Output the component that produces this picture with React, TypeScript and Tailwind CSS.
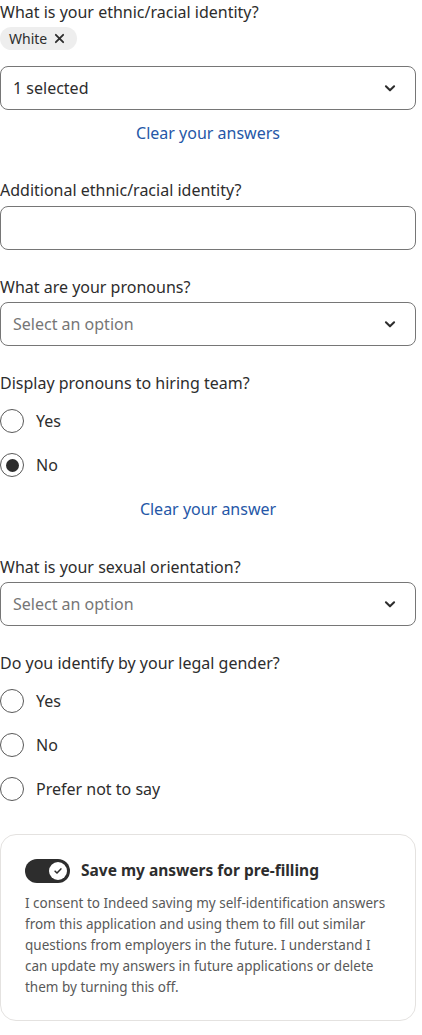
import React from "react";

const font = { fontFamily: '"Noto Sans", "Open Sans", sans-serif' };

function Chevron() {
  return (
    <svg width="14" height="14" viewBox="0 0 24 24" fill="none" stroke="#2d2d2d" strokeWidth="3.5" strokeLinecap="round" strokeLinejoin="round">
      <path d="M5 9l7 7 7-7" />
    </svg>
  );
}

function Select({ value, placeholder }: { value?: string; placeholder?: string }) {
  return (
    <div className="flex h-[44px] w-full items-center justify-between rounded-[8px] border border-[#767676] pl-[12px] pr-[18px]">
      <span className={value ? "text-[16px] text-[#2d2d2d]" : "text-[16px] text-[#767676]"}>{value ?? placeholder}</span>
      <Chevron />
    </div>
  );
}

function Label({ children, className = "" }: { children: React.ReactNode; className?: string }) {
  return <div className={"text-[16px] leading-[24px] text-[#2d2d2d] " + className}>{children}</div>;
}

function Radio({ label, checked = false }: { label: string; checked?: boolean }) {
  return (
    <div className="flex h-[44px] items-center gap-[12px]">
      <div className="flex h-[24px] w-[24px] items-center justify-center rounded-full border border-[#595959] bg-white">
        {checked && <div className="h-[13px] w-[13px] rounded-full bg-[#2d2d2d]" />}
      </div>
      <span className="text-[16px] text-[#2d2d2d]">{label}</span>
    </div>
  );
}

function ClearLink({ children, className = "" }: { children: React.ReactNode; className?: string }) {
  return (
    <div className={"flex justify-center text-[16px] leading-[24px] text-[#2557a7] " + className}>{children}</div>
  );
}

export default function App() {
  return (
    <div className="min-h-[1035px] w-[422px] bg-white pr-[6px]" style={font}>
      <Label>What is your ethnic/racial identity?</Label>
      <div className="mt-[3px] flex">
        <div className="flex h-[23px] items-center gap-[7px] rounded-full bg-[#eeeeee] pl-[9px] pr-[12px]">
          <span className="text-[14px] text-[#2d2d2d]">White</span>
          <svg width="11" height="11" viewBox="0 0 12 12" stroke="#2d2d2d" strokeWidth="2" strokeLinecap="round">
            <path d="M2 2l8 8M10 2l-8 8" />
          </svg>
        </div>
      </div>
      <div className="mt-[16px]">
        <Select value="1 selected" />
      </div>
      <ClearLink className="mt-[11px]">Clear your answers</ClearLink>

      <Label className="mt-[33px]">Additional ethnic/racial identity?</Label>
      <div className="mt-[4px] h-[44px] w-full rounded-[8px] border border-[#767676]" />

      <Label className="mt-[25px]">What are your pronouns?</Label>
      <div className="mt-[3px]">
        <Select placeholder="Select an option" />
      </div>

      <Label className="mt-[25px]">Display pronouns to hiring team?</Label>
      <div className="mt-[4px]">
        <Radio label="Yes" />
        <Radio label="No" checked />
      </div>
      <ClearLink className="mt-[10px]">Clear your answer</ClearLink>

      <Label className="mt-[34px]">What is your sexual orientation?</Label>
      <div className="mt-[3px]">
        <Select placeholder="Select an option" />
      </div>

      <Label className="mt-[25px]">Do you identify by your legal gender?</Label>
      <div className="mt-[4px]">
        <Radio label="Yes" />
        <Radio label="No" />
        <Radio label="Prefer not to say" />
      </div>

      <div className="mt-[23px] rounded-[16px] border border-[#e4e2e0] px-[24px] pb-[22px] pt-[24px]">
        <div className="flex items-center gap-[11px]">
          <div className="flex h-[24px] w-[45px] items-center justify-end rounded-full bg-[#2d2d2d] pr-[3px]">
            <div className="flex h-[18px] w-[18px] items-center justify-center rounded-full bg-white">
              <svg width="10" height="10" viewBox="0 0 12 12" fill="none" stroke="#2d2d2d" strokeWidth="1.8" strokeLinecap="round" strokeLinejoin="round">
                <path d="M2.5 6.2l2.3 2.3 4.7-5" />
              </svg>
            </div>
          </div>
          <span className="text-[15.5px] font-bold text-[#2d2d2d]">Save my answers for pre-filling</span>
        </div>
        <p className="mt-[10px] text-[13.5px] leading-[21px] text-[#595959]">
          I consent to Indeed saving my self-identification answers from this application and using them to fill out similar questions from employers in the future. I understand I can update my answers in future applications or delete them by turning this off.
        </p>
      </div>
    </div>
  );
}
